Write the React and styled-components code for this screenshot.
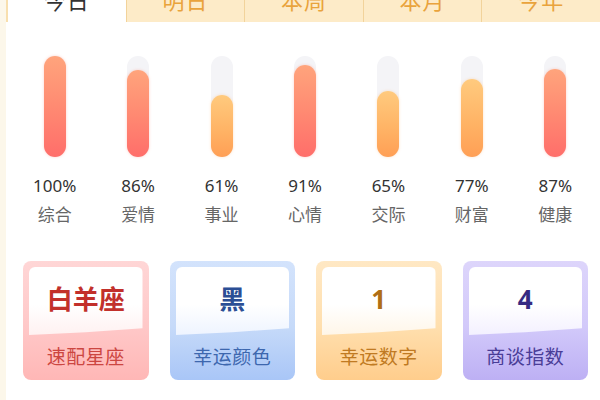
import React from "react";
import styled, { createGlobalStyle } from "styled-components";

const Global = createGlobalStyle`
  html, body { margin: 0; padding: 0; background: #ffffff; }
  body { font-family: "Noto Sans CJK SC", "Noto Sans", sans-serif; }
`;

const Page = styled.div`
  width: 600px;
  height: 400px;
  overflow: hidden;
  background: #fcf7ea;
  padding-left: 6px;
  box-sizing: border-box;
`;

const Panel = styled.div`
  background: #ffffff;
  height: 100%;
  display: flex;
  flex-direction: column;
`;

const Tabs = styled.div`
  display: flex;
  margin-top: -21px;
  height: 43px;
  padding-left: 2px;
  background: #f8dfae;
`;

const Tab = styled.div`
  flex: 1;
  display: flex;
  align-items: flex-start;
  justify-content: center;
  font-size: 22px;
  line-height: 40px;
  letter-spacing: 1px;
  color: ${(p) => (p.$active ? "#333333" : "#e9a33c")};
  background: ${(p) => (p.$active ? "#ffffff" : "#fdebc8")};
  border-left: ${(p) => (p.$first ? "none" : "1px solid #f2d39b")};
`;

const Bars = styled.div`
  display: grid;
  grid-template-columns: repeat(7, 1fr);
  padding: 0 3px 0 7px;
  margin-top: 34px;
`;

const Column = styled.div`
  display: flex;
  flex-direction: column;
  align-items: center;
`;

const Track = styled.div`
  width: 22px;
  height: 101px;
  border-radius: 11px;
  background: #f4f4f7;
  display: flex;
  align-items: flex-end;
`;

const Fill = styled.div`
  width: 100%;
  border-radius: 11px;
  background: ${(p) =>
    p.$hot
      ? "linear-gradient(180deg, #ffa47c 0%, #ff8a72 50%, #ff6e6a 100%)"
      : "linear-gradient(180deg, #ffca7e 0%, #ffb466 55%, #ff9f55 100%)"};
  box-shadow: 0 0 3px ${(p) => (p.$hot ? "rgba(255,120,100,0.35)" : "rgba(255,170,90,0.35)")};
`;

const Percent = styled.div`
  margin-top: 19px;
  font-family: "Noto Sans", "Noto Sans CJK SC", sans-serif;
  font-size: 17px;
  line-height: 20px;
  color: #333333;
`;

const Label = styled.div`
  margin-top: 8px;
  font-size: 17px;
  line-height: 20px;
  color: #666666;
`;

const Cards = styled.div`
  display: grid;
  grid-template-columns: repeat(4, 1fr);
  column-gap: 21px;
  padding: 0 12px 0 17px;
  margin-top: 37px;
`;

const Card = styled.div`
  height: 119px;
  border-radius: 8px;
  padding: 6px 6px 0;
  box-sizing: border-box;
  display: flex;
  flex-direction: column;
  background: linear-gradient(180deg, ${(p) => p.$c.top} 0%, ${(p) => p.$c.mid} 55%, ${(p) => p.$c.bottom} 100%);
`;

const Inner = styled.div`
  height: 68px;
  border-radius: 6px 6px 0 0;
  display: flex;
  align-items: center;
  justify-content: center;
  padding-bottom: 4px;
  box-sizing: border-box;
  background: linear-gradient(180deg, #ffffff 0%, #ffffff 55%, ${(p) => p.$c.inner} 100%);
  clip-path: polygon(0 0, 100% 0, 100% 90%, 50% 96%, 0 100%);
`;

const Value = styled.div`
  font-family: "Noto Sans", "Noto Sans CJK SC", sans-serif;
  font-size: 26px;
  font-weight: 700;
  line-height: 30px;
  color: ${(p) => p.$c.value};
`;

const CardLabel = styled.div`
  flex: 1;
  display: flex;
  align-items: center;
  justify-content: center;
  margin-top: -4px;
  font-size: 19px;
  letter-spacing: 0.5px;
  color: ${(p) => p.$c.label};
`;

const tabs = ["今日", "明日", "本周", "本月", "今年"];

const stats = [
  { v: 100, l: "综合" },
  { v: 86, l: "爱情" },
  { v: 61, l: "事业" },
  { v: 91, l: "心情" },
  { v: 65, l: "交际" },
  { v: 77, l: "财富" },
  { v: 87, l: "健康" },
];

const palettes = {
  red: { top: "#ffd6d6", mid: "#ffc8c8", bottom: "#ffb7b6", inner: "#fff1f1", value: "#c2302b", label: "#cc4641" },
  blue: { top: "#d3e3fc", mid: "#c6daf9", bottom: "#a9c6f7", inner: "#eef4ff", value: "#2b4e95", label: "#3d67ae" },
  orange: { top: "#ffe8c4", mid: "#ffdfae", bottom: "#ffcd8c", inner: "#fff6e8", value: "#b06e14", label: "#c07a22" },
  purple: { top: "#ddd5fb", mid: "#d2c9fa", bottom: "#bdb0f4", inner: "#f3f0ff", value: "#362a82", label: "#4a3d97" },
};

const cards = [
  { v: "白羊座", l: "速配星座", c: palettes.red },
  { v: "黑", l: "幸运颜色", c: palettes.blue },
  { v: "1", l: "幸运数字", c: palettes.orange },
  { v: "4", l: "商谈指数", c: palettes.purple },
];

export default function App() {
  return (
    <>
      <Global />
      <Page>
        <Panel>
          <Tabs>
            {tabs.map((t, i) => (
              <Tab key={t} $active={i === 0} $first={i === 0}>
                {t}
              </Tab>
            ))}
          </Tabs>
          <Bars>
            {stats.map((s) => (
              <Column key={s.l}>
                <Track>
                  <Fill $hot={s.v >= 80} style={{ height: `${s.v}%` }} />
                </Track>
                <Percent>{s.v}%</Percent>
                <Label>{s.l}</Label>
              </Column>
            ))}
          </Bars>
          <Cards>
            {cards.map((c) => (
              <Card key={c.l} $c={c.c}>
                <Inner $c={c.c}>
                  <Value $c={c.c}>{c.v}</Value>
                </Inner>
                <CardLabel $c={c.c}>{c.l}</CardLabel>
              </Card>
            ))}
          </Cards>
        </Panel>
      </Page>
    </>
  );
}
